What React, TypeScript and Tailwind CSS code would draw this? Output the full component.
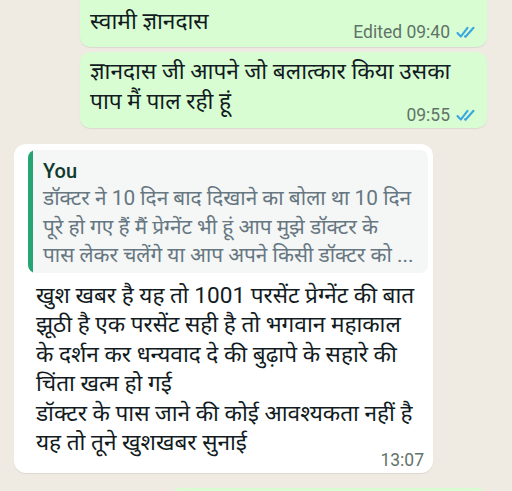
import React from 'react'

const font = { fontFamily: '"Roboto", "Noto Sans", "Lohit Devanagari", "Noto Sans Devanagari", sans-serif' }

function Ticks() {
  return (
    <svg width="20" height="13" viewBox="0 0 20 13" fill="none" className="ml-[6px]">
      <path d="M1.5 7 L4.8 10.6 L11.5 1.8" stroke="#3aa6e0" strokeWidth="2.1" strokeLinecap="round" strokeLinejoin="round" />
      <path d="M9 10.3 L9.5 10.8 L17.5 1.8" stroke="#3aa6e0" strokeWidth="2.1" strokeLinecap="round" strokeLinejoin="round" />
    </svg>
  )
}

function Meta({ text, ticks }: { text: string; ticks?: boolean }) {
  return (
    <div className="flex items-center justify-end text-[17.5px] leading-[20px] text-[#5f7468]">
      <span>{text}</span>
      {ticks && <Ticks />}
    </div>
  )
}

export default function App() {
  return (
    <div className="relative h-[491px] w-[512px] overflow-hidden bg-[#efeae2]" style={font}>
      <div className="flex flex-col">
        {/* sent, top one is cut off */}
        <div className="ml-[80px] mr-[25px] -mt-[20px] rounded-[10px] bg-[#d9fdd3] pl-[10px] pr-[11px] pt-[6px] pb-[5px] shadow-[0_1px_1px_rgba(0,0,0,0.08)]">
          <div className="h-[21px]" />
          <div className="text-[22.7px] leading-[30px] text-[#111b21]">स्वामी ज्ञानदास</div>
          <div className="-mt-[15px]">
            <Meta text="Edited 09:40" ticks />
          </div>
        </div>

        <div className="ml-[80px] mr-[25px] mt-[5px] rounded-[10px] bg-[#d9fdd3] pl-[10px] pr-[11px] pt-[5px] pb-[3px] shadow-[0_1px_1px_rgba(0,0,0,0.08)]">
          <div className="text-[22.7px] leading-[30px] text-[#111b21]">
            ज्ञानदास जी आपने जो बलात्कार किया उसका
            <br />
            पाप मैं पाल रही हूं
          </div>
          <div className="-mt-[12px]">
            <Meta text="09:55" ticks />
          </div>
        </div>

        {/* received reply */}
        <div className="ml-[14px] mt-[16px] w-[419px] rounded-[12px] bg-white pl-[14px] pr-[5px] pt-[6px] pb-[3px] shadow-[0_1px_1px_rgba(0,0,0,0.08)]">
          <div className="flex overflow-hidden rounded-[8px] bg-[#f5f6f6]">
            <div className="w-[5px] shrink-0 bg-[#25a574]" />
            <div className="pl-[10px] pr-[6px] pt-[8px] pb-[3px]">
              <div className="text-[20px] font-medium leading-[26px] text-[#0f3a2c]">You</div>
              <div className="whitespace-nowrap text-[20.8px] leading-[28.5px] text-[#667781]">
                डॉक्टर ने 10 दिन बाद दिखाने का बोला था 10 दिन
                <br />
                पूरे हो गए हैं मैं प्रेग्नेंट भी हूं आप मुझे डॉक्टर के
                <br />
                पास लेकर चलेंगे या आप अपने किसी डॉक्टर को ...
              </div>
            </div>
          </div>
          <div className="whitespace-nowrap pl-[8px] pt-[8px] text-[22.6px] leading-[29.6px] text-[#111b21]">
            खुश खबर है यह तो 1001 परसेंट प्रेग्नेंट की बात
            <br />
            झूठी है एक परसेंट सही है तो भगवान महाकाल
            <br />
            के दर्शन कर धन्यवाद दे की बुढ़ापे के सहारे की
            <br />
            चिंता खत्म हो गई
            <br />
            डॉक्टर के पास जाने की कोई आवश्यकता नहीं है
            <br />
            यह तो तूने खुशखबर सुनाई
          </div>
          <div className="-mt-[8px] pr-[4px]">
            <Meta text="13:07" />
          </div>
        </div>

        <div className="ml-[170px] mr-[25px] mt-[15px] h-[40px] rounded-[10px] bg-[#d9fdd3]" />
      </div>
    </div>
  )
}
